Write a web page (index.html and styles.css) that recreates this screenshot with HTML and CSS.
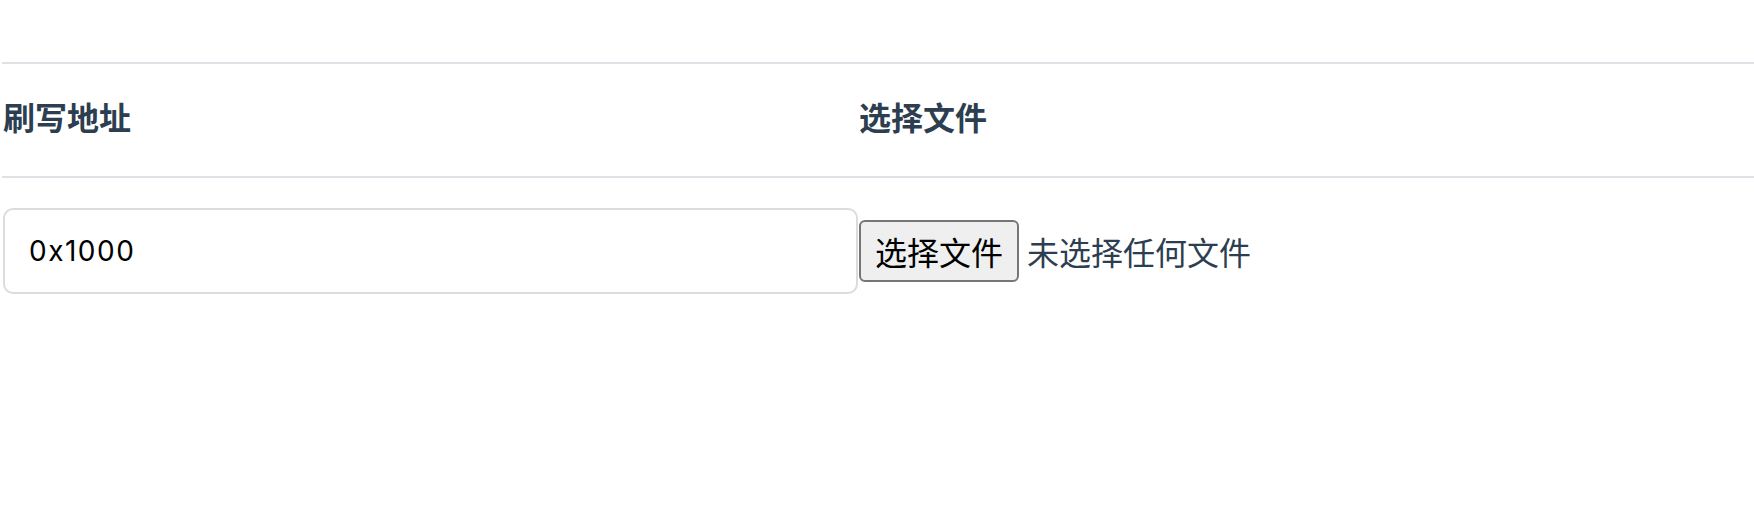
FILE: index.html
```html
<!DOCTYPE html>
<html lang="zh-CN">
<head>
<meta charset="utf-8">
<title>刷写</title>
<link rel="stylesheet" href="styles.css">
</head>
<body>
<table class="flash-table">
  <colgroup>
    <col class="col-addr">
    <col class="col-file">
  </colgroup>
  <thead>
    <tr>
      <th>刷写地址</th>
      <th>选择文件</th>
    </tr>
  </thead>
  <tbody>
    <tr>
      <td><input class="addr-input" type="text" value="0x1000"></td>
      <td>
        <div class="file-picker">
          <button class="file-btn" type="button">选择文件</button>
          <span class="file-status">未选择任何文件</span>
        </div>
      </td>
    </tr>
  </tbody>
</table>
</body>
</html>
```

FILE: styles.css
```css
html, body {
  margin: 0;
  padding: 0;
  background: #ffffff;
}

body {
  font-family: "Noto Sans CJK SC", "Noto Sans", sans-serif;
  color: #2c3e50;
}

.flash-table {
  margin: 62px 0 0 2px;
  width: calc(100% - 2px);
  border-collapse: collapse;
  table-layout: fixed;
}

.col-addr {
  width: 856px;
}

.flash-table th {
  height: 104px;
  padding: 0 0 8px 1px;
  border-top: 2px solid #dee2e6;
  border-bottom: 2px solid #dee2e6;
  text-align: left;
  vertical-align: middle;
  font-size: 32px;
  font-weight: 700;
  line-height: 40px;
  color: #2c3e50;
}

.flash-table td {
  padding: 30px 0 30px 1px;
  vertical-align: middle;
}

.addr-input {
  box-sizing: border-box;
  display: block;
  width: 855px;
  height: 86px;
  margin: 0;
  padding: 0 24px;
  border: 2px solid #dcdcdc;
  border-radius: 10px;
  background: #ffffff;
  font-family: "Inter", "Open Sans", sans-serif;
  font-size: 28px;
  letter-spacing: 1.5px;
  color: #000000;
  outline: none;
}

.file-picker {
  display: flex;
  align-items: center;
  gap: 8px;
}

.file-btn {
  box-sizing: border-box;
  width: 160px;
  height: 62px;
  margin: 0;
  padding: 0;
  border: 2px solid #767676;
  border-radius: 6px;
  background: #efefef;
  font-family: "Noto Sans CJK SC", sans-serif;
  font-size: 32px;
  line-height: 40px;
  color: #000000;
}

.file-status {
  font-size: 32px;
  line-height: 40px;
  color: #2c3e50;
}
```
